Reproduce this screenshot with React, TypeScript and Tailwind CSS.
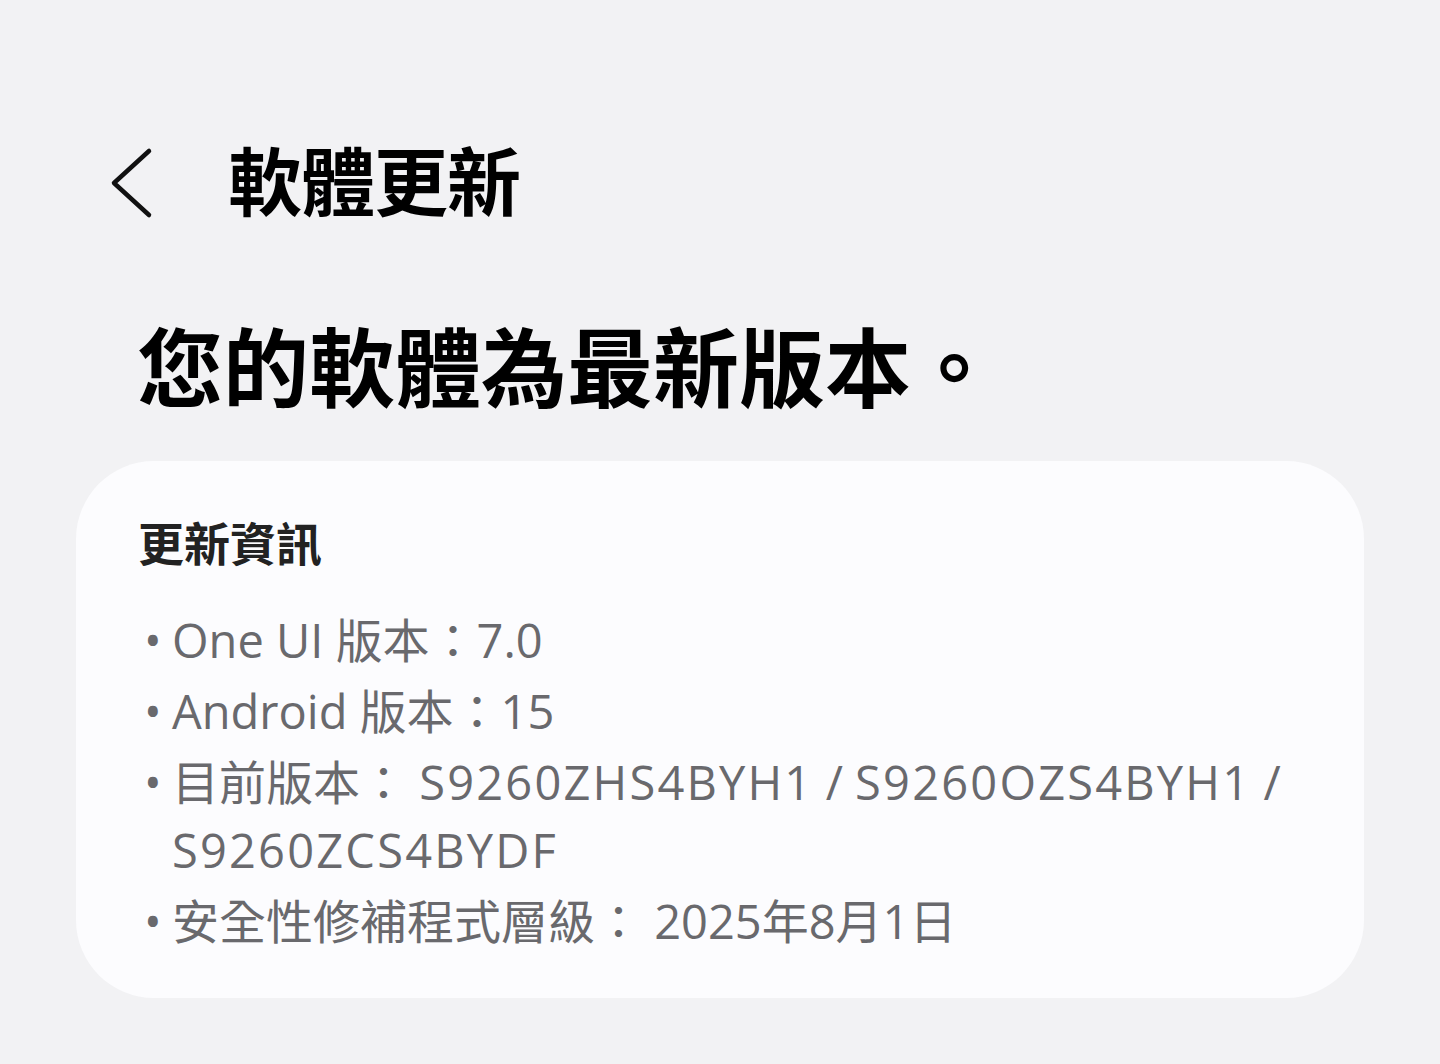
import React from 'react';

const Code = ({ children }: { children: React.ReactNode }) => (
  <span className="tracking-[2.2px]">{children}</span>
);

const INFO_ITEMS: React.ReactNode[] = [
  'One UI 版本：7.0',
  'Android 版本：15',
  <>
    目前版本： <Code>S9260ZHS4BYH1</Code> / <Code>S9260OZS4BYH1</Code> /
    <br />
    <Code>S9260ZCS4BYDF</Code>
  </>,
  '安全性修補程式層級： 2025年8月1日',
];

function BackIcon() {
  return (
    <svg width="44" height="72" viewBox="0 0 44 72" fill="none" className="shrink-0">
      <polyline
        points="39,4 4,36 39,68"
        stroke="#111"
        strokeWidth="4.5"
        strokeLinecap="round"
        strokeLinejoin="round"
      />
    </svg>
  );
}

export default function App() {
  return (
    <div className="min-h-screen w-full bg-[#f2f2f4] pt-[138px] font-['Roboto','Noto_Sans_CJK_TC',sans-serif] text-black">
      {/* Top bar */}
      <div className="flex items-center h-[90px] pl-[110px]">
        <BackIcon />
        <h1 className="ml-[74px] text-[74px] leading-[90px] font-bold tracking-[-1px] pt-[4px]">軟體更新</h1>
      </div>

      {/* Status */}
      <div className="mt-[93px] pl-[137px] text-[86px] leading-[102px] font-bold">
        您的軟體為最新版本。
      </div>

      {/* Update info card */}
      <div className="mt-[38px] mx-[76px] rounded-[78px] bg-[#fcfcfe] pt-[56px] pb-[43px] px-[62px]">
        <div className="text-[46px] leading-[56px] font-bold text-[#222]">更新資訊</div>
        <ul className="mt-[33px] flex flex-col gap-[3px] text-[47px] leading-[68px] text-[#69696d] font-['Open_Sans','Noto_Sans_CJK_TC',sans-serif]">
          {INFO_ITEMS.map((item, i) => (
            <li key={i} className="flex">
              <span className="w-[34px] shrink-0 pl-[6px]">•</span>
              <span>{item}</span>
            </li>
          ))}
        </ul>
      </div>
    </div>
  );
}
